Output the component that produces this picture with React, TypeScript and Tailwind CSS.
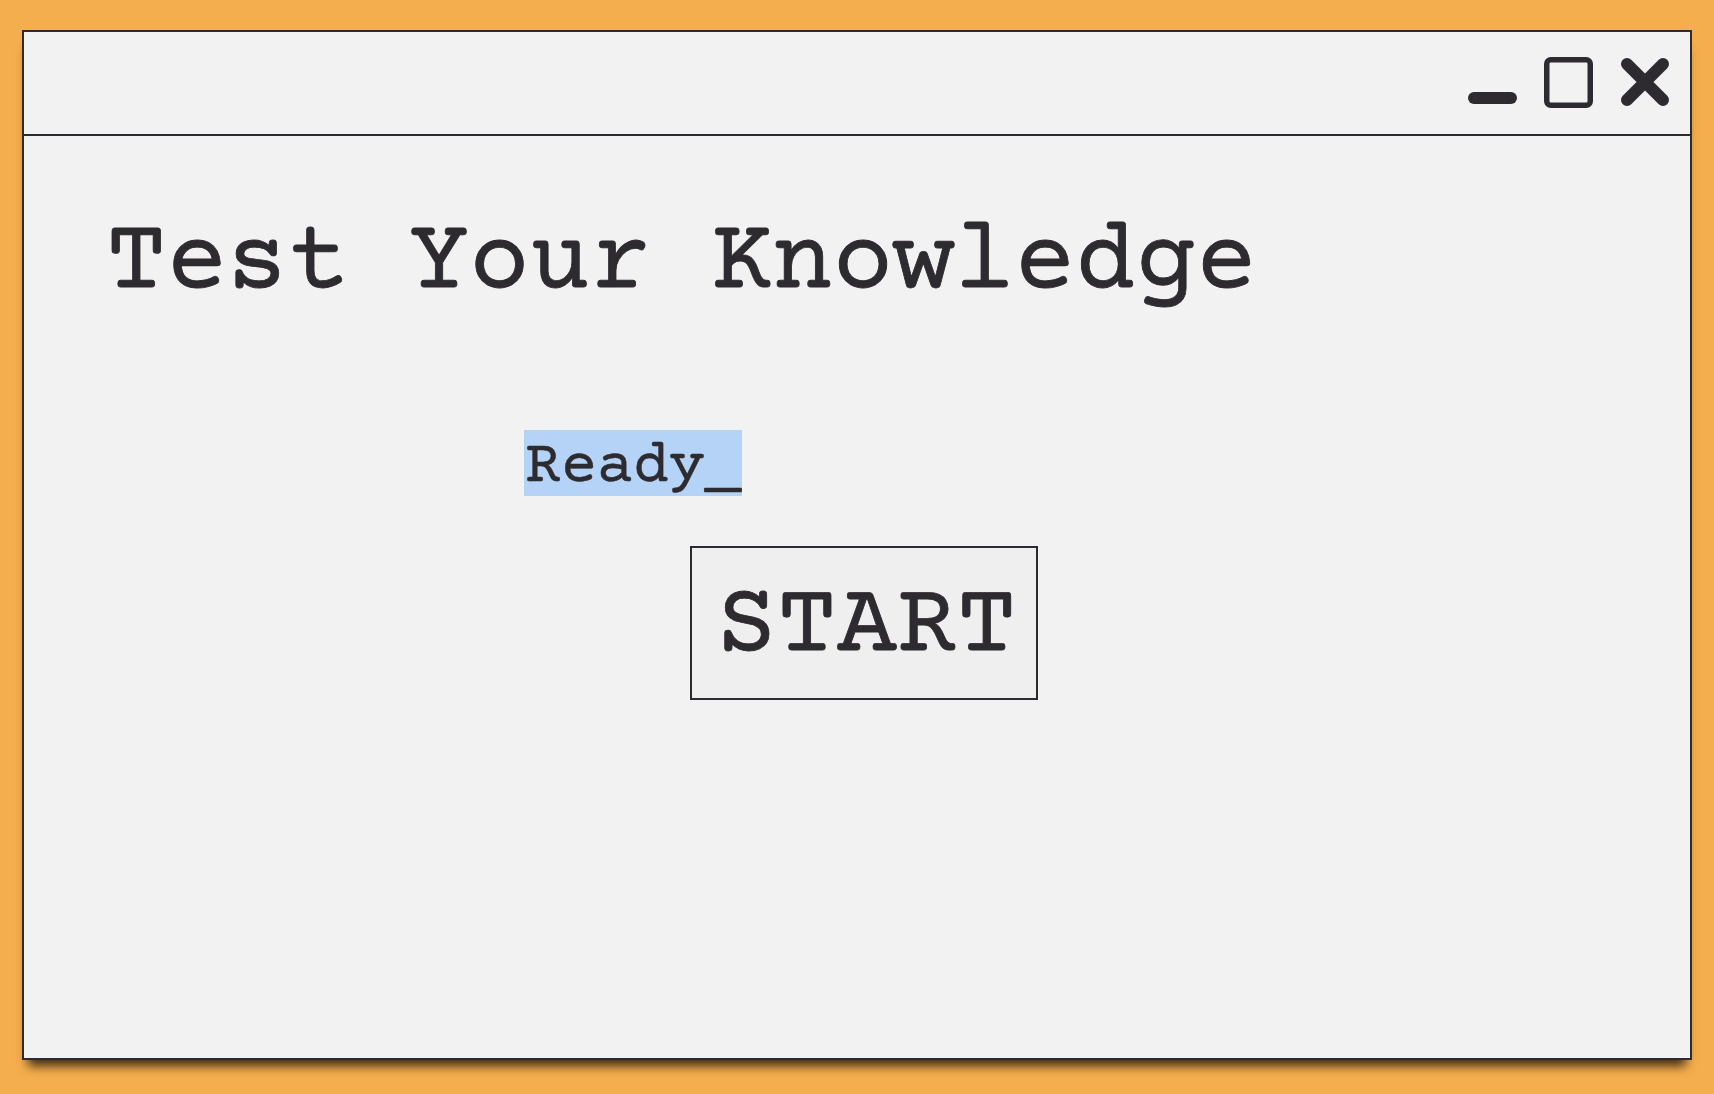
// Quiz start window
const mono = "font-['Courier_Prime','Liberation_Mono',monospace]"

function WindowControls() {
  return (
    <div className="flex items-center gap-[26px]">
      <svg width="50" height="52" viewBox="0 0 50 52" aria-label="minimize">
        <rect x="0" y="35" width="49" height="12" rx="6" fill="#2d2b30" />
      </svg>
      <svg width="50" height="52" viewBox="0 0 50 52" aria-label="maximize">
        <rect x="2.75" y="2.75" width="43.5" height="45.5" rx="4" fill="none" stroke="#2d2b30" strokeWidth="5.5" />
      </svg>
      <svg width="50" height="52" viewBox="0 0 50 52" aria-label="close">
        <path d="M 7 7 L 43 43 M 43 7 L 7 43" stroke="#2d2b30" strokeWidth="12" strokeLinecap="round" />
      </svg>
    </div>
  )
}

export default function App() {
  return (
    <div className="min-h-screen w-full bg-[#f5ae4d] pt-[30px] pl-[22px] pr-[22px] pb-[34px]">
      <div className="flex h-[1030px] flex-col border-2 border-[#2d2b30] bg-[#f2f2f2] shadow-[0_12px_10px_-6px_rgba(0,0,0,0.75)]">
        <div className="flex h-[104px] items-center justify-end border-b-2 border-[#2d2b30] pr-[20px]">
          <WindowControls />
        </div>

        <div className={`flex flex-col text-[#2d2b30] ${mono}`}>
          <h1 className="mt-[79px] pl-[82px] text-[101px] font-normal leading-none [-webkit-text-stroke:0.8px_#2d2b30]">
            Test Your Knowledge
          </h1>

          <div className="mt-[114px] pl-[500px]">
            <span className="inline-block h-[66px] bg-[#b4d3f6] px-px pt-[8px] text-[60px] leading-none [-webkit-text-stroke:0.5px_#2d2b30]">
              Ready_
            </span>
          </div>

          <div className="mt-[50px] pl-[666px]">
            <button className="border-2 border-[#2d2b30] bg-[#efefef] pt-[30px] pr-[19px] pb-[20px] pl-[25px] text-[100px] leading-none [-webkit-text-stroke:0.8px_#2d2b30]">
              START
            </button>
          </div>
        </div>
      </div>
    </div>
  )
}
